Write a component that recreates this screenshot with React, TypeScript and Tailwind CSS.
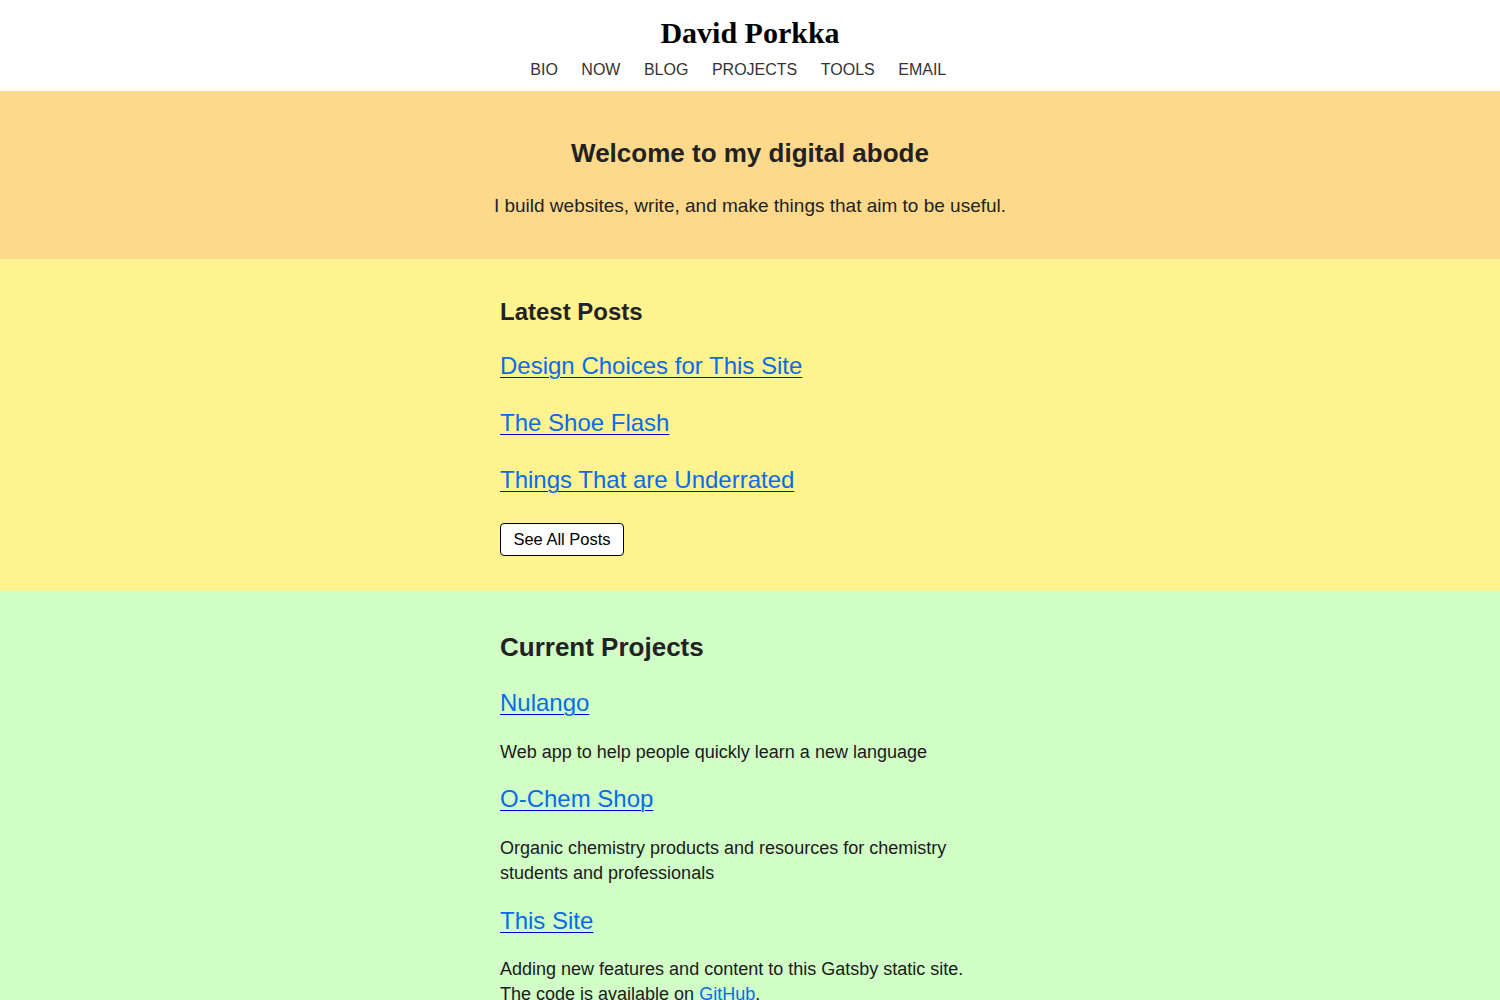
import React from "react"

const nav = ["BIO", "NOW", "BLOG", "PROJECTS", "TOOLS", "EMAIL"]

const posts = ["Design Choices for This Site", "The Shoe Flash", "Things That are Underrated"]

const linkCls =
  "text-[24px] leading-[30px] text-[#0a6bea] underline decoration-[#0000dd] underline-offset-[3px] decoration-1"

export default function App() {
  return (
    <div className="min-h-screen bg-[#d0fec6] font-['Liberation_Sans',Arial,sans-serif] text-[#222]">
      {/* Header */}
      <header className="bg-white pt-[15px] pb-[11px] flex flex-col items-center">
        <h1 className="font-['Liberation_Serif','Times_New_Roman',serif] font-bold text-[30px] leading-[36px] text-black">
          David Porkka
        </h1>
        <nav className="mt-[9px] flex text-[16px] leading-[20px] text-[#333]">
          {nav.map((n) => (
            <a key={n} href="#" className="mr-[23.5px]">
              {n}
            </a>
          ))}
        </nav>
      </header>

      {/* Hero */}
      <section className="bg-[#fed98b] pt-[46px] pb-[40px] text-center">
        <h2 className="text-[26px] leading-[32px] font-bold">Welcome to my digital abode</h2>
        <p className="mt-[24px] text-[19px] leading-[26px]">
          I build websites, write, and make things that aim to be useful.
        </p>
      </section>

      {/* Latest posts */}
      <section className="bg-[#fff38f] pt-[38px] pb-[35px]">
        <div className="w-[500px] mx-auto">
          <h2 className="text-[24px] leading-[30px] font-bold">Latest Posts</h2>
          <ul className="mt-[24px] flex flex-col gap-[27px]">
            {posts.map((p) => (
              <li key={p}>
                <a href="#" className={linkCls}>
                  {p}
                </a>
              </li>
            ))}
          </ul>
          <button className="mt-[28px] h-[33px] w-[124px] bg-white border border-black rounded-[4px] text-[16.5px] text-black">
            See All Posts
          </button>
        </div>
      </section>

      {/* Projects */}
      <section className="bg-[#d0fec6] pt-[40px] pb-[40px]">
        <div className="w-[500px] mx-auto text-[18px] leading-[25px] text-[#1a1a1a]">
          <h2 className="text-[26px] leading-[32px] font-bold text-[#222]">Current Projects</h2>
          <div className="mt-[25px]">
            <a href="#" className={linkCls}>Nulango</a>
          </div>
          <p className="mt-[22px]">Web app to help people quickly learn a new language</p>
          <div className="mt-[19px]">
            <a href="#" className={linkCls}>O-Chem Shop</a>
          </div>
          <p className="mt-[22px] pr-[40px]">
            Organic chemistry products and resources for chemistry students and professionals
          </p>
          <div className="mt-[20px]">
            <a href="#" className={linkCls}>This Site</a>
          </div>
          <p className="mt-[21px] pr-[15px]">
            Adding new features and content to this Gatsby static site. The code is available on{" "}
            <a href="#" className="text-[#0a6bea]">GitHub</a>.
          </p>
        </div>
      </section>
    </div>
  )
}
